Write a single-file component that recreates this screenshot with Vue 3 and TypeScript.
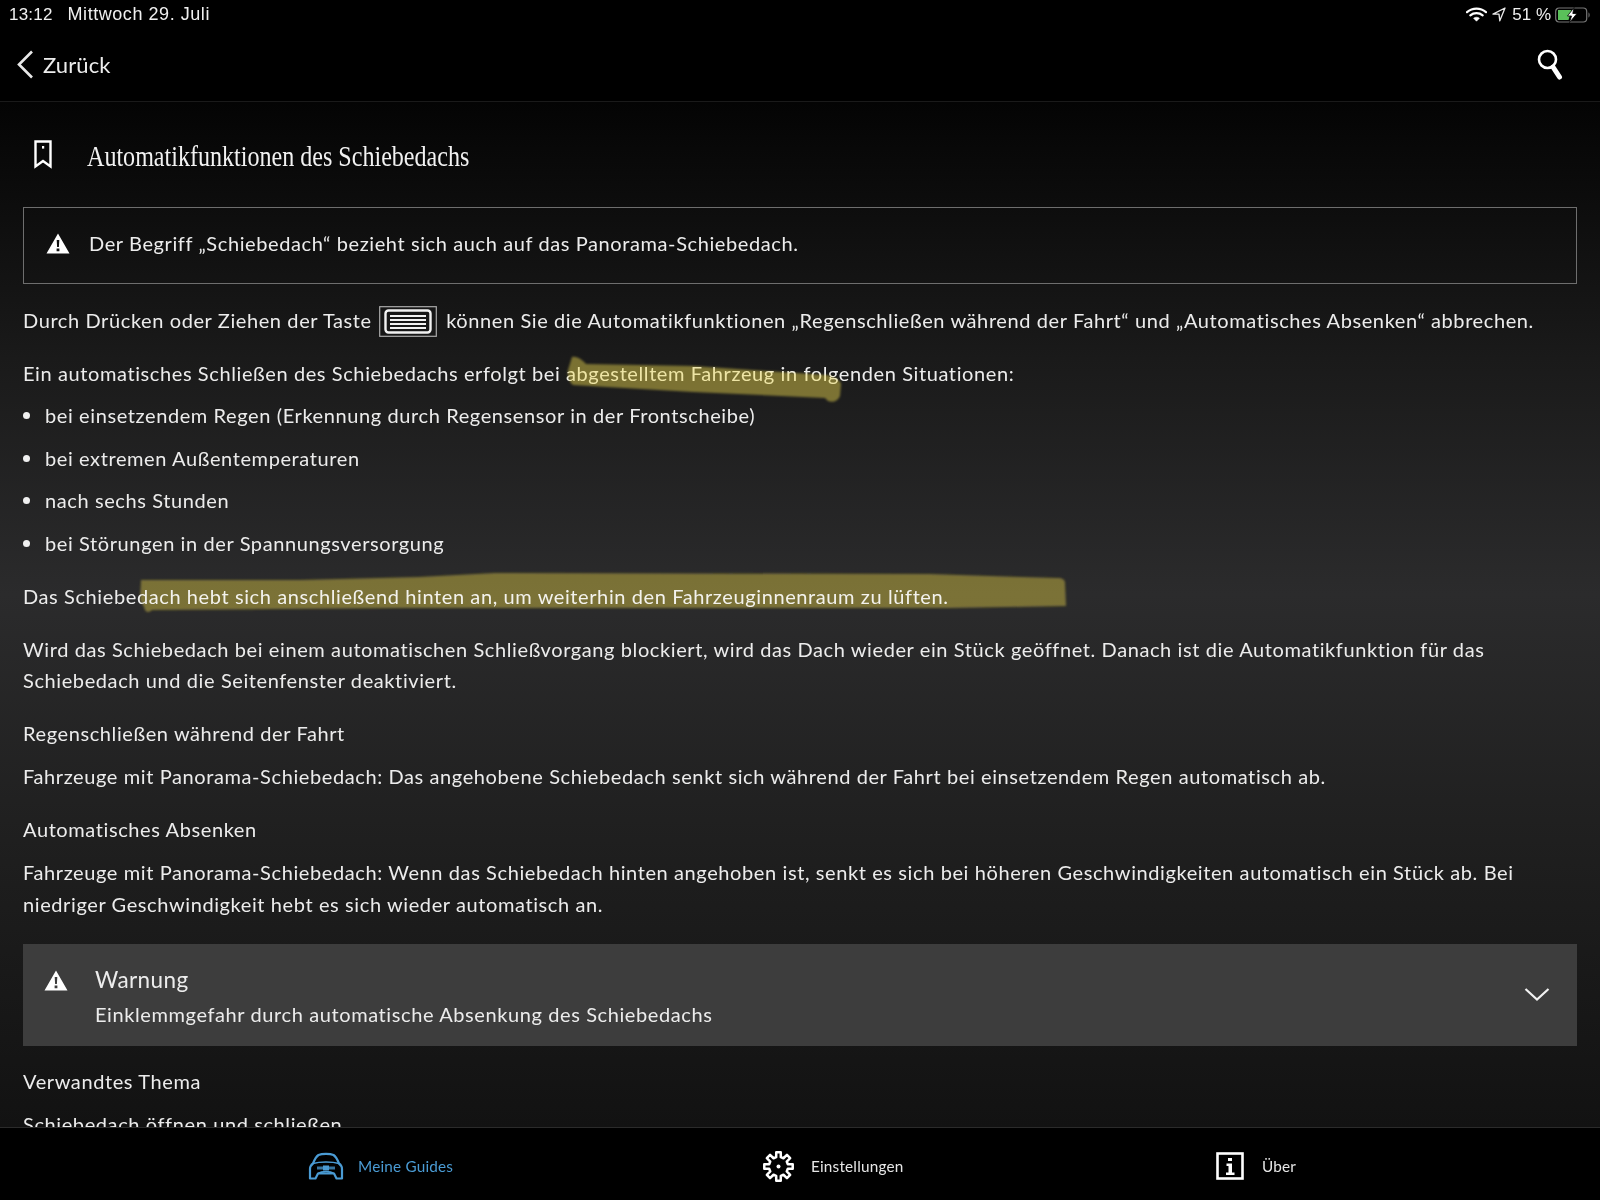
<script setup lang="ts">
const bullets: string[] = [
  'bei einsetzendem Regen (Erkennung durch Regensensor in der Frontscheibe)',
  'bei extremen Außentemperaturen',
  'nach sechs Stunden',
  'bei Störungen in der Spannungsversorgung',
]

function polar(r: number, deg: number): string {
  const a = (deg * Math.PI) / 180
  return `${(16.5 + r * Math.cos(a)).toFixed(2)} ${(16.5 + r * Math.sin(a)).toFixed(2)}`
}
const gearPath: string = Array.from({ length: 8 }, (_, i) => {
  const c = i * 45 - 90
  return `${i === 0 ? 'M' : 'L'}${polar(9.6, c - 14)}L${polar(14.4, c - 9)}L${polar(14.4, c + 9)}L${polar(9.6, c + 14)}`
}).join('') + 'Z'
</script>

<template>
  <div class="page">
    <header class="top">
      <div class="status">
        <span class="time">13:12</span>
        <span class="date">Mittwoch 29. Juli</span>
        <span class="spacer"></span>
        <svg class="wifi" width="21" height="15" viewBox="0 0 21 15">
          <path d="M1 5.2C6.500.5 14.500.5 20 5.200" fill="none" stroke="#fff" stroke-width="2.200" stroke-linecap="round" />
          <path d="M4.300 8.300C7.800 5.400 13.200 5.400 16.700 8.300" fill="none" stroke="#fff" stroke-width="2.200" stroke-linecap="round" />
          <path d="M7.600 11.200C9.300 9.900 11.700 9.900 13.400 11.200L10.500 14.200Z" fill="#fff" stroke="#fff" stroke-width=".6" />
        </svg>
        <svg class="loc" width="14" height="15" viewBox="0 0 14 15">
          <path d="M13 1 1 7.200h6l.8 6.600Z" fill="none" stroke="#e8e8e8" stroke-width="1.300" stroke-linejoin="round" />
        </svg>
        <span class="pct">51 %</span>
        <svg class="batt" width="36" height="16" viewBox="0 0 36 16">
          <rect x=".7" y="1" width="31" height="14" rx="3.500" fill="none" stroke="#777" stroke-width="1.200" />
          <path d="M3 3h13.500l-3 10H3Z" fill="#5ac05a" />
          <path d="M33.500 5.500c1.500.5 1.500 4.500 0 5Z" fill="#777" />
          <path d="M19 .5 12.500 9h4l-2 6.500L22 6.500h-4.200Z" fill="#fff" stroke="#000" stroke-width=".8" />
        </svg>
      </div>
      <nav class="nav">
        <svg class="chev" width="17" height="29" viewBox="0 0 17 29">
          <path d="M15 1.500 2 14.500 15 27.500" fill="none" stroke="#e8e8e8" stroke-width="2.600" />
        </svg>
        <span class="back">Zurück</span>
        <span class="spacer"></span>
        <svg class="search" width="26" height="32" viewBox="0 0 26 32">
          <circle cx="10.500" cy="10.500" r="8.500" fill="none" stroke="#fff" stroke-width="2.600" />
          <path d="M16 18 22.500 28" fill="none" stroke="#fff" stroke-width="5" stroke-linecap="round" />
        </svg>
      </nav>
    </header>

    <main class="content">
      <div class="title-row">
        <svg class="bookmark" width="18" height="29" viewBox="0 0 18 29">
          <path d="M1.500 1.500h15v25L9 21 1.500 26.500Z" fill="none" stroke="#fff" stroke-width="2.400" />
          <rect x="8" y="6" width="2.200" height="2.600" fill="#fff" />
        </svg>
        <h1>Automatikfunktionen des Schiebedachs</h1>
      </div>

      <div class="note">
        <svg class="tri" width="24" height="21" viewBox="0 0 24 21">
          <path d="M12 .5 23.500 20.500H.5Z M10.700 7l.4 7h1.800l.4-7Z M10.600 15.500v2.800h2.800v-2.800Z" fill="#fff" fill-rule="evenodd" />
        </svg>
        <span>Der Begriff „Schiebedach“ bezieht sich auch auf das Panorama-Schiebedach.</span>
      </div>

      <p class="first">
        Durch Drücken oder Ziehen der Taste
        <svg class="key" width="58" height="31" viewBox="0 0 58 31">
          <rect x=".7" y=".7" width="56.600" height="29.600" fill="none" stroke="#aaa" stroke-width="1.200" />
          <rect x="6.500" y="4.500" width="45" height="22" rx="3" fill="none" stroke="#f2f2f2" stroke-width="2.400" />
          <path d="M11 10h36M11 14h36M11 18h36M11 22h36" stroke="#f2f2f2" stroke-width="1.800" />
        </svg>
        können Sie die Automatikfunktionen „Regenschließen während der Fahrt“ und „Automatisches Absenken“ abbrechen.
      </p>
      <p>Ein automatisches Schließen des Schiebedachs erfolgt bei abgestelltem Fahrzeug in folgenden Situationen:</p>
      <ul>
        <li v-for="item in bullets" :key="item">{{ item }}</li>
      </ul>
      <p>Das Schiebedach hebt sich anschließend hinten an, um weiterhin den Fahrzeuginnenraum zu lüften.</p>
      <p>Wird das Schiebedach bei einem automatischen Schließvorgang blockiert, wird das Dach wieder ein Stück geöffnet. Danach ist die Automatikfunktion für das Schiebedach und die Seitenfenster deaktiviert.</p>
      <p>Regenschließen während der Fahrt</p>
      <p class="tight">Fahrzeuge mit Panorama-Schiebedach: Das angehobene Schiebedach senkt sich während der Fahrt bei einsetzendem Regen automatisch ab.</p>
      <p>Automatisches Absenken</p>
      <p class="tight">Fahrzeuge mit Panorama-Schiebedach: Wenn das Schiebedach hinten angehoben ist, senkt es sich bei höheren Geschwindigkeiten automatisch ein Stück ab. Bei niedriger Geschwindigkeit hebt es sich wieder automatisch an.</p>

      <section class="warn">
        <svg class="tri warn-tri" width="24" height="21" viewBox="0 0 24 21">
          <path d="M12 .5 23.500 20.500H.5Z M10.700 7l.4 7h1.800l.4-7Z M10.600 15.500v2.800h2.800v-2.800Z" fill="#fff" fill-rule="evenodd" />
        </svg>
        <div class="warn-text">
          <div class="warn-title">Warnung</div>
          <div class="warn-sub">Einklemmgefahr durch automatische Absenkung des Schiebedachs</div>
        </div>
        <svg class="warn-chev" width="26" height="15" viewBox="0 0 26 15">
          <path d="M1.500 2 13 12.500 24.500 2" fill="none" stroke="#f2f2f2" stroke-width="2.200" />
        </svg>
      </section>

      <p class="related">Verwandtes Thema</p>
      <p class="tight">Schiebedach öffnen und schließen</p>

      <svg class="marks" width="1600" height="1025" viewBox="0 102 1600 1025">
        <defs>
          <filter id="soft" x="-5%" y="-20%" width="110%" height="140%"><feGaussianBlur stdDeviation="1" /></filter>
        </defs>
        <path class="mark-one" filter="url(#soft)" d="M572 357C578 356 583 361 586 364L693 366 827 375C835 377 840 380 841 384L840 396C838 401 833 403 828 401L825 398 693 392 573 385C569 382 567 376 568 370Z" />
        <path class="mark-two" filter="url(#soft)" d="M141 580 300 580 419 577 495 573 929 574 1057 578C1063 578 1065 580 1065 583L1066 606 948 608 406 608 152 610C149 613 145 613 144 607L140 600Z" />
      </svg>
    </main>

    <footer class="tabs">
      <div class="tab active">
        <svg width="36" height="28" viewBox="0 0 36 28">
          <g fill="none" stroke="#4a9bd4" stroke-width="2.200" stroke-linejoin="round">
            <path d="M10.500 3C14 1.500 22 1.500 25.500 3 27 4 30 9 31 11.500c2 1.500 3 3 3 5.500v9.500h-5.500l-2.500-5H10l-2.500 5H2V17c0-2.500 1-4 3-5.500C6 9 9 4 10.500 3Z" />
            <path d="M5 11.500C12 9.500 24 9.500 31 11.500" stroke-width="1.600" />
            <path d="M10 21.500C14 19 22 19 26 21.500" stroke-width="1.600" />
          </g>
          <path d="M9 14.500h18v3H9Z" fill="#4a9bd4" opacity=".75" />
          <rect x="15" y="13.500" width="6" height="5" fill="#4a9bd4" />
        </svg>
        <span>Meine Guides</span>
      </div>
      <div class="tab settings">
        <svg class="gear" width="33" height="33" viewBox="0 0 33 33">
          <path :d="gearPath" fill="none" stroke="#fff" stroke-width="2.500" stroke-linejoin="round" />
          <circle cx="16.500" cy="16.500" r="2" fill="#fff" />
        </svg>
        <span>Einstellungen</span>
      </div>
      <div class="tab info">
        <svg width="28" height="28" viewBox="0 0 28 28">
          <rect x="1.500" y="1.500" width="25" height="25" fill="none" stroke="#fff" stroke-width="2.600" />
          <path d="M12 6h4v3h-4ZM10.500 11.500h5.500v9h2.500v2.500h-8.500v-2.500h2.500v-6.500h-2Z" fill="#fff" />
        </svg>
        <span>Über</span>
      </div>
    </footer>
  </div>
</template>

<style scoped>
.page {
  width: 1600px;
  height: 1200px;
  display: flex;
  flex-direction: column;
  overflow: hidden;
  background: #000;
  color: #ececec;
  font-family: "Lato", "Liberation Sans", sans-serif;
  font-size: 20px;
  letter-spacing: 0.6px;
}
.top {
  flex: none;
  height: 102px;
  border-bottom: 1px solid #1a1a1a;
  box-sizing: border-box;
  background: #000;
}
.status {
  height: 29px;
  display: flex;
  align-items: center;
  padding: 0 9px 0 9px;
  box-sizing: border-box;
  font-family: "Liberation Sans", sans-serif;
  font-size: 18px;
  letter-spacing: 0.55px;
  color: #f0f0f0;
}
.time { font-size: 17px; letter-spacing: 0.2px; }
.date { margin-left: 15px; }
.spacer { flex: 1; }
.loc { margin-left: 5px; }
.pct { margin-left: 6px; font-size: 17px; letter-spacing: 0; }
.batt { margin-left: 4px; }
.nav {
  height: 72px;
  display: flex;
  align-items: center;
  padding: 0 37px 1px 17px;
  box-sizing: border-box;
}
.back {
  margin-left: 9px;
  font-size: 22px;
  letter-spacing: 0.1px;
}
.content {
  position: relative;
  flex: 1;
  min-height: 0;
  overflow: hidden;
  padding: 0 23px;
  background: linear-gradient(180deg, #040404 0%, #1a1a1a 25%, #2b2b2c 48%, #1f1f1f 72%, #121212 100%);
}
.title-row {
  display: flex;
  align-items: center;
  height: 105px;
  padding-left: 11px;
}
.bookmark { flex: none; }
h1 {
  margin: 3px 0 0 35px;
  font-family: "Liberation Serif", serif;
  font-weight: 400;
  font-size: 29px;
  letter-spacing: 0;
  color: #f2f2f2;
  transform: scaleX(0.83);
  transform-origin: left center;
  white-space: nowrap;
}
.note {
  display: flex;
  align-items: center;
  height: 77px;
  box-sizing: border-box;
  border: 1.5px solid #6e6e6e;
  padding: 0 0 5px 22px;
}
.note span { margin-left: 19px; }
.tri { flex: none; }
p {
  margin: 21.5px 0 0;
  line-height: 31.5px;
}
p.first { margin-top: 20.5px; }
p.tight { margin-top: 11.5px; }
p.related { margin-top: 20px; }
.key {
  vertical-align: -5px;
  margin: -4px 3px -4px 2px;
}
ul {
  list-style: none;
  margin: 0;
  padding: 0;
}
li {
  display: flex;
  align-items: center;
  margin-top: 11px;
  line-height: 31.5px;
}
li::before {
  content: "";
  flex: none;
  width: 7px;
  height: 7px;
  border-radius: 50%;
  background: #f0f0f0;
  margin-right: 15px;
}
.warn {
  display: flex;
  align-items: flex-start;
  height: 102px;
  margin-top: 23.5px;
  padding: 0 27px 0 21px;
  background: #3d3d3d;
}
.warn-tri { margin-top: 26px; }
.warn-text { flex: 1; margin-left: 27px; padding-top: 20px; }
.warn-title { font-size: 22.5px; line-height: 32px; letter-spacing: 0.4px; }
.warn-sub { line-height: 36px; }
.warn-chev { margin-top: 43px; }
.marks {
  position: absolute;
  left: 0;
  top: 0;
  pointer-events: none;
}
.mark-one {
  fill: #f0dc50;
  fill-opacity: 0.45;
}
.mark-two {
  fill: rgb(96, 84, 17);
  mix-blend-mode: screen;
}
.tabs {
  flex: none;
  height: 73px;
  display: grid;
  grid-template-columns: repeat(3, 454px);
  padding: 4px 0 0 308px;
  border-top: 1px solid #2b2b2b;
  box-sizing: border-box;
  background: #000;
  font-size: 15.3px;
  letter-spacing: 0.2px;
  color: #e6e6e6;
}
.tab {
  display: flex;
  align-items: center;
  gap: 14px;
}
.tab.settings { gap: 16px; }
.tab.info { gap: 18px; }
.tab.active { color: #4a9bd4; }
</style>
